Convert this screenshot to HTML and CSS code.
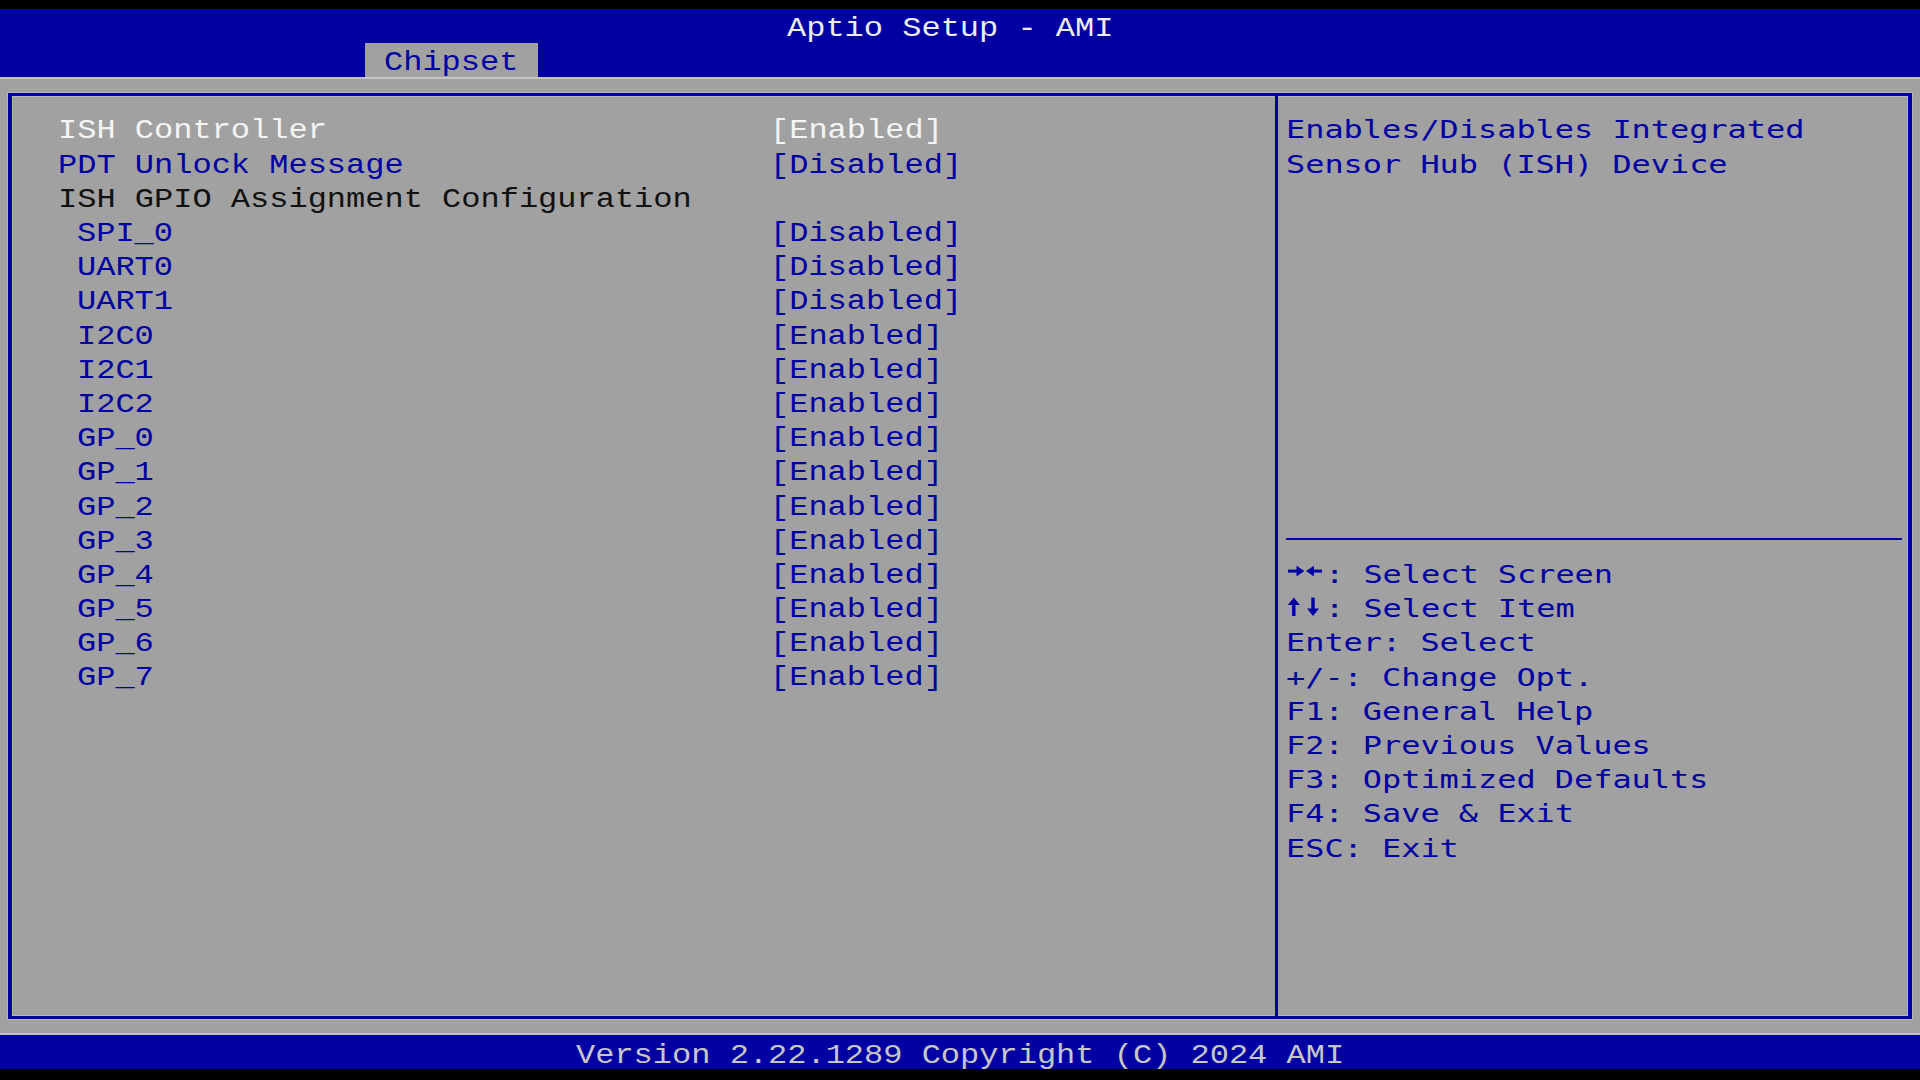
FILE: index.html
```html
<!DOCTYPE html>
<html lang="en">
<head>
<meta charset="utf-8">
<title>Aptio Setup - AMI</title>
<link rel="stylesheet" href="styles.css">
</head>
<body>
<div class="screen">
  <div class="letterbox-top"></div>
  <header class="head">
    <div class="title-row"><span class="t t-title">Aptio Setup - AMI</span></div>
    <div class="tab-row">
      <div class="tab"><span class="t t-tab">Chipset</span></div>
    </div>
  </header>
  <main class="body">
    <div class="frame">
      <section class="pane-left">
        <div class="row"><span class="t white">ISH Controller</span><span class="t white">[Enabled]</span></div>
        <div class="row"><span class="t blue">PDT Unlock Message</span><span class="t blue">[Disabled]</span></div>
        <div class="row"><span class="t dark">ISH GPIO Assignment Configuration</span></div>
        <div class="row sub"><span class="t blue">SPI_0</span><span class="t blue">[Disabled]</span></div>
        <div class="row sub"><span class="t blue">UART0</span><span class="t blue">[Disabled]</span></div>
        <div class="row sub"><span class="t blue">UART1</span><span class="t blue">[Disabled]</span></div>
        <div class="row sub"><span class="t blue">I2C0</span><span class="t blue">[Enabled]</span></div>
        <div class="row sub"><span class="t blue">I2C1</span><span class="t blue">[Enabled]</span></div>
        <div class="row sub"><span class="t blue">I2C2</span><span class="t blue">[Enabled]</span></div>
        <div class="row sub"><span class="t blue">GP_0</span><span class="t blue">[Enabled]</span></div>
        <div class="row sub"><span class="t blue">GP_1</span><span class="t blue">[Enabled]</span></div>
        <div class="row sub"><span class="t blue">GP_2</span><span class="t blue">[Enabled]</span></div>
        <div class="row sub"><span class="t blue">GP_3</span><span class="t blue">[Enabled]</span></div>
        <div class="row sub"><span class="t blue">GP_4</span><span class="t blue">[Enabled]</span></div>
        <div class="row sub"><span class="t blue">GP_5</span><span class="t blue">[Enabled]</span></div>
        <div class="row sub"><span class="t blue">GP_6</span><span class="t blue">[Enabled]</span></div>
        <div class="row sub"><span class="t blue">GP_7</span><span class="t blue">[Enabled]</span></div>
      </section>
      <aside class="pane-right">
        <div class="desc">
          <div class="hline"><span class="h">Enables/Disables Integrated</span></div>
          <div class="hline"><span class="h">Sensor Hub (ISH) Device</span></div>
        </div>
        <div class="sep"></div>
        <div class="keys">
          <div class="hline">
            <svg class="arrows" viewBox="0 0 38.4 34.2" aria-label="Right and left arrows">
              <rect x="2" y="13.6" width="11" height="3" />
              <polygon points="10.5,9.8 18.4,15.1 10.5,20.4" />
              <polygon points="20,15.1 27.9,9.8 27.9,20.4" />
              <rect x="26" y="13.6" width="10" height="3" />
            </svg><span class="h">: Select Screen</span>
          </div>
          <div class="hline">
            <svg class="arrows" viewBox="0 0 38.4 34.2" aria-label="Up and down arrows">
              <polygon points="7.8,7.6 1.8,15 13.8,15" />
              <rect x="6.1" y="13.5" width="3.4" height="12.5" />
              <rect x="25.3" y="7.6" width="3.4" height="12.5" />
              <polygon points="21,18.6 33,18.6 27,26" />
            </svg><span class="h">: Select Item</span>
          </div>
          <div class="hline"><span class="h">Enter: Select</span></div>
          <div class="hline"><span class="h">+/-: Change Opt.</span></div>
          <div class="hline"><span class="h">F1: General Help</span></div>
          <div class="hline"><span class="h">F2: Previous Values</span></div>
          <div class="hline"><span class="h">F3: Optimized Defaults</span></div>
          <div class="hline"><span class="h">F4: Save &amp; Exit</span></div>
          <div class="hline"><span class="h">ESC: Exit</span></div>
        </div>
      </aside>
    </div>
  </main>
  <footer class="foot"><span class="t t-foot">Version 2.22.1289 Copyright (C) 2024 AMI</span></footer>
</div>
</body>
</html>
```

FILE: styles.css
```css
:root {
  --cw: 19.2px;
  --rh: 34.2px;
  --blue: #0000a3;
  --gray: #a1a1a1;
  --light: #c4c4c4;
}

html, body {
  margin: 0;
  padding: 0;
  background: #000;
}

.screen {
  width: 1920px;
  height: 1080px;
  display: flex;
  flex-direction: column;
  background: #000;
  overflow: hidden;
}

.letterbox-top {
  height: 8.9px;
  flex: none;
}

/* ---------- text cells ---------- */
.t {
  display: inline-block;
  font-family: "Liberation Mono", "DejaVu Sans Mono", monospace;
  font-size: 27px;
  line-height: var(--rh);
  white-space: pre;
  transform: translateY(3px) scaleX(1.1852);
  transform-origin: 0 50%;
}

.h {
  display: inline-block;
  font-family: "DejaVu Sans Mono", "Liberation Mono", monospace;
  font-size: 24px;
  line-height: var(--rh);
  white-space: pre;
  color: var(--blue);
  transform: translateY(1.6px) scaleX(1.3287);
  transform-origin: 0 50%;
}

.white { color: #f4f4f4; }
.blue { color: var(--blue); }
.dark { color: #111111; }

/* ---------- header ---------- */
.head {
  height: calc(var(--rh) * 2);
  flex: none;
  background: var(--blue);
  display: flex;
  flex-direction: column;
}

.title-row {
  height: var(--rh);
  padding-left: calc(var(--cw) * 41);
}

.title-row .t { transform: translateY(2.6px) scaleX(1.1852); }

.t-title { color: #ececec; }

.tab-row {
  height: var(--rh);
  padding-left: calc(var(--cw) * 19);
}

.tab {
  width: calc(var(--cw) * 9);
  height: var(--rh);
  box-sizing: border-box;
  padding-left: var(--cw);
  background: var(--gray);
}

.t-tab { color: var(--blue); }

/* ---------- main ---------- */
.body {
  height: calc(var(--rh) * 28);
  flex: none;
  box-sizing: border-box;
  background: var(--gray);
  padding-top: 15.7px;
  padding-left: 7.6px;
  box-shadow: inset 0 2px 0 var(--light), inset 0 -2px 0 var(--light);
}

.frame {
  width: 1904.8px;
  height: 926.3px;
  box-sizing: border-box;
  border-style: solid;
  border-color: var(--blue);
  border-width: 3px 4px;
  display: flex;
  box-shadow: 0 0 0 1px #b6b6b6, inset 0 0 0 1px #b6b6b6;
}

.pane-left {
  width: 1266.7px;
  flex: none;
  box-sizing: border-box;
  border-right: 3px solid var(--blue);
  padding-top: 15.5px;
  padding-left: 46px;
}

.row {
  height: var(--rh);
  display: grid;
  grid-template-columns: calc(var(--cw) * 37 + 2px) auto;
}

.row.sub > .t:first-child {
  margin-left: var(--cw);
}

.pane-right {
  flex: 1;
  padding-top: 15.5px;
  display: flex;
  flex-direction: column;
}

.hline {
  height: var(--rh);
  padding-left: 8.1px;
  display: flex;
}

.arrows {
  width: calc(var(--cw) * 2);
  height: var(--rh);
  flex: none;
  fill: var(--blue);
}

.desc {
  height: calc(var(--rh) * 12);
}

.sep {
  height: var(--rh);
  display: flex;
  align-items: center;
  padding-left: 8.1px;
}

.sep::before {
  content: "";
  width: 615.6px;
  height: 2px;
  background: var(--blue);
}

/* ---------- footer ---------- */
.foot {
  height: var(--rh);
  flex: none;
  background: var(--blue);
  padding-left: calc(var(--cw) * 30);
}

.foot .t { transform: translateY(3.6px) scaleX(1.1852); }

.t-foot { color: #c6c6c6; }
```
